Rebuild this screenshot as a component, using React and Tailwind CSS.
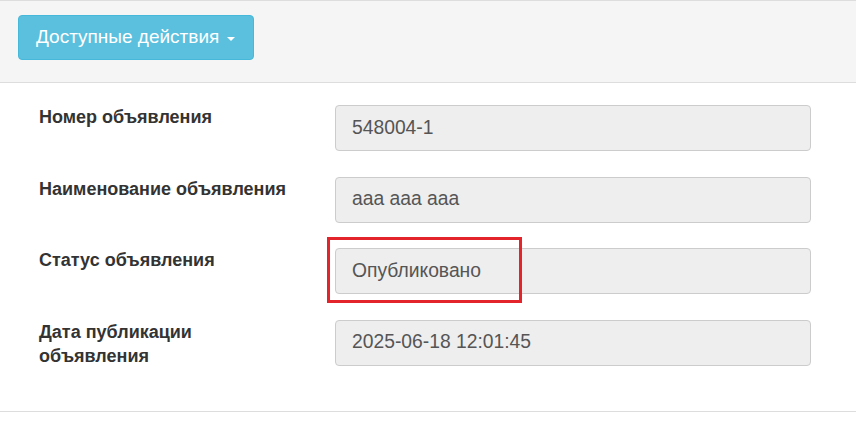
const FIELDS = [
  { label: 'Номер объявления', value: '548004-1' },
  { label: 'Наименование объявления', value: 'aaa aaa aaa' },
  { label: 'Статус объявления', value: 'Опубликовано', marked: true },
  { label: 'Дата публикации объявления', value: '2025-06-18 12:01:45' },
];

export default function App() {
  return (
    <div className="w-[856px] h-[421px] bg-white overflow-hidden font-['Liberation_Sans',Arial,sans-serif]">
      {/* Panel heading */}
      <div className="h-[83px] bg-[#f5f5f5] border-t border-b border-[#dddddd] pl-[18px] pt-[14px]">
        <button className="h-[45px] w-[236px] flex items-center pl-[17px] bg-[#5bc0de] border border-[#46b8da] rounded-[4px] text-white text-[19px]">
          Доступные действия
          <span className="ml-[8px] mt-[2px] w-0 h-0 border-l-[4px] border-r-[4px] border-t-[4px] border-l-transparent border-r-transparent border-t-white" />
        </button>
      </div>

      {/* Fields */}
      <div className="pt-[22px] pb-[45px] flex flex-col gap-[25.5px]">
        {FIELDS.map((f) => (
          <div key={f.label} className="h-[46px] flex items-start">
            <div className="ml-[39px] w-[254px] text-[18px] leading-[24px] font-bold text-[#333333]">
              {f.label}
            </div>
            <div className="relative ml-[42px] w-[476px] h-[46px]">
              <div className="h-full flex items-center pl-[16px] bg-[#eeeeee] border border-[#cccccc] rounded-[4px] text-[19.3px] text-[#555555]">
                {f.value}
              </div>
              {f.marked && (
                <div className="absolute left-[-8px] top-[-11px] w-[195px] h-[66px] border-[3px] border-[#e3242b]" />
              )}
            </div>
          </div>
        ))}
      </div>

      {/* Panel footer */}
      <div className="border-t border-[#dddddd] h-[20px]" />
    </div>
  );
}
